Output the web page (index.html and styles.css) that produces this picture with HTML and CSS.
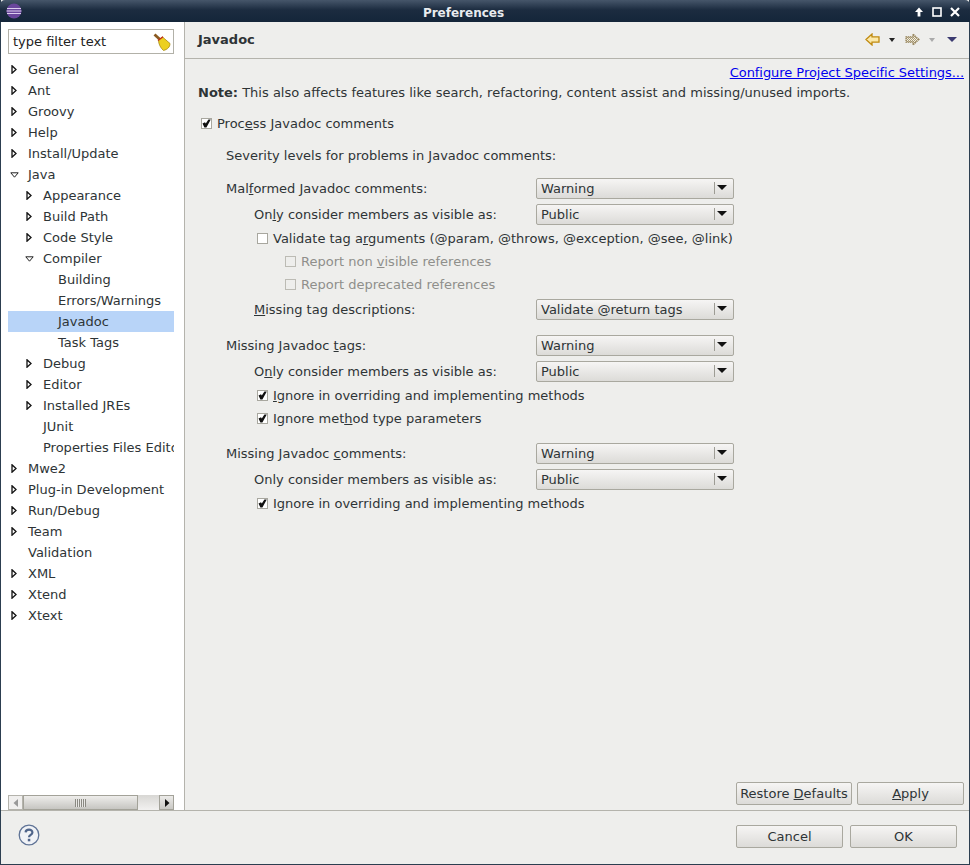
FILE: index.html
```html
<!DOCTYPE html>
<html lang="en">
<head>
    <meta charset="UTF-8">
    <title>Preferences</title>
    <link rel="stylesheet" href="styles.css">
</head>
<body>
<svg class="defs">
    <symbol id="closed" viewBox="0 0 6 9"><path d="M1 .8 L5 4.5 L1 8.2 Z" fill="#fff" stroke="#111" stroke-width="1.3"/></symbol>
    <symbol id="open" viewBox="0 0 9 6"><path d="M.8 .8 H8.2 L4.5 5.2 Z" fill="#fff" stroke="#222" stroke-width="1"/></symbol>
    <symbol id="tick" viewBox="0 0 9 9"><path d="M.5 4.5 L3 3.2 L3.8 4.6 L6.4 .6 H8.8 L4.4 8.4 H2.4 Z" fill="#111"/></symbol>
    <pattern id="dither" width="2" height="2" patternUnits="userSpaceOnUse">
        <rect width="2" height="2" fill="#f4f0e0"/>
        <rect width="1" height="1" fill="#a89a78"/>
        <rect x="1" y="1" width="1" height="1" fill="#a89a78"/>
    </pattern>
</svg>
<div class="window">
    <header class="titlebar">
        <svg class="eclipse" viewBox="0 0 16 16" width="16" height="16">
            <circle cx="8" cy="8" r="7.5" fill="#6a469c"/>
            <path d="M1 5.5 H15 M0.6 8 H15.4 M1 10.5 H15" stroke="#dccdee" stroke-width="1.2"/>
        </svg>
        <span class="title">Preferences</span>
        <div class="winbtns">
            <svg viewBox="0 0 12 12" width="12" height="12"><path d="M6 1.5 L10 6 H7.4 V10.5 H4.6 V6 H2 Z" fill="#fff"/></svg>
            <svg viewBox="0 0 12 12" width="12" height="12"><rect x="2" y="2" width="8" height="8" fill="none" stroke="#fff" stroke-width="1.6"/></svg>
            <svg viewBox="0 0 12 12" width="12" height="12"><path d="M2 2 L10 10 M10 2 L2 10" stroke="#fff" stroke-width="2.2"/></svg>
        </div>
    </header>

    <div class="main">
        <aside class="sidebar">
            <div class="filter">
                <span>type filter text</span>
                <svg viewBox="0 0 18 18" width="18" height="18">
                    <path d="M1.5 1.5 L7 6.5" stroke="#8a5a20" stroke-width="2.8"/>
                    <path d="M5.5 7 L9.5 4 L17 10.5 C17 14 14.5 16.5 10.5 17.5 C7.5 15 5.5 11 5.5 7 Z" fill="#ecd020" stroke="#a88a10" stroke-width="0.8"/>
                    <path d="M5 7.5 L10 3.8" stroke="#c02a1a" stroke-width="1.4"/>
                </svg>
            </div>
            <ul class="tree">
                <li><svg class="arrow"><use href="#closed"/></svg>General</li>
                <li><svg class="arrow"><use href="#closed"/></svg>Ant</li>
                <li><svg class="arrow"><use href="#closed"/></svg>Groovy</li>
                <li><svg class="arrow"><use href="#closed"/></svg>Help</li>
                <li><svg class="arrow"><use href="#closed"/></svg>Install/Update</li>
                <li><svg class="arrow-open"><use href="#open"/></svg>Java</li>
                <li class="lv1"><svg class="arrow"><use href="#closed"/></svg>Appearance</li>
                <li class="lv1"><svg class="arrow"><use href="#closed"/></svg>Build Path</li>
                <li class="lv1"><svg class="arrow"><use href="#closed"/></svg>Code Style</li>
                <li class="lv1"><svg class="arrow-open"><use href="#open"/></svg>Compiler</li>
                <li class="lv2">Building</li>
                <li class="lv2">Errors/Warnings</li>
                <li class="lv2 selected">Javadoc</li>
                <li class="lv2">Task Tags</li>
                <li class="lv1"><svg class="arrow"><use href="#closed"/></svg>Debug</li>
                <li class="lv1"><svg class="arrow"><use href="#closed"/></svg>Editor</li>
                <li class="lv1"><svg class="arrow"><use href="#closed"/></svg>Installed JREs</li>
                <li class="lv1">JUnit</li>
                <li class="lv1">Properties Files Editor</li>
                <li><svg class="arrow"><use href="#closed"/></svg>Mwe2</li>
                <li><svg class="arrow"><use href="#closed"/></svg>Plug-in Development</li>
                <li><svg class="arrow"><use href="#closed"/></svg>Run/Debug</li>
                <li><svg class="arrow"><use href="#closed"/></svg>Team</li>
                <li>Validation</li>
                <li><svg class="arrow"><use href="#closed"/></svg>XML</li>
                <li><svg class="arrow"><use href="#closed"/></svg>Xtend</li>
                <li><svg class="arrow"><use href="#closed"/></svg>Xtext</li>
            </ul>
            <div class="hscroll">
                <div class="sbtn sbtn-off"><svg viewBox="0 0 6 8" width="6" height="8"><path d="M5 0 L0.5 4 L5 8 Z" fill="#999"/></svg></div>
                <div class="thumb"><span class="grip"></span></div>
                <div class="strack"></div>
                <div class="sbtn sbtn-on"><svg viewBox="0 0 6 8" width="6" height="8"><path d="M1 0 L5.5 4 L1 8 Z" fill="#111"/></svg></div>
            </div>
        </aside>

        <section class="content">
            <div class="pagehead">
                <h1>Javadoc</h1>
                <div class="navicons">
                    <svg viewBox="0 0 15 13" width="15" height="13"><path d="M1 6.5 L7 1 V3.8 H14 V9.2 H7 V12 Z" fill="#fbe8a8" stroke="#c08a10" stroke-width="1.3"/></svg>
                    <svg class="mini" viewBox="0 0 6 4" width="6" height="4"><path d="M0 0 H6 L3 4 Z" fill="#222"/></svg>
                    <svg class="fwd" viewBox="0 0 15 13" width="15" height="13"><path d="M14 6.5 L8 1 V3.8 H1 V9.2 H8 V12 Z" fill="url(#dither)" stroke="#94825a" stroke-width="1.2" stroke-dasharray="1.5 .6"/></svg>
                    <svg class="mini" viewBox="0 0 6 4" width="6" height="4"><path d="M0 0 H6 L3 4 Z" fill="#aaa"/></svg>
                    <svg class="menu" viewBox="0 0 10 5" width="10" height="5"><path d="M0 0 H10 L5 5 Z" fill="#3b3a70"/></svg>
                </div>
            </div>

            <div class="linkrow"><a href="#">Configure Project Specific Settings...</a></div>
            <p class="note"><b>Note:</b> This also affects features like search, refactoring, content assist and missing/unused imports.</p>

            <div class="form">
                <div class="row check"><span class="box"><svg><use href="#tick"/></svg></span><span>Proc<u>e</u>ss Javadoc comments</span></div>

                <div class="row ind1 gap10">Severity levels for problems in Javadoc comments:</div>

                <div class="row ind1 gap11"><span class="label">Mal<u>f</u>ormed Javadoc comments:</span><div class="combo">Warning</div></div>
                <div class="row ind2 gap4"><span class="label">On<u>l</u>y consider members as visible as:</span><div class="combo">Public</div></div>
                <div class="row check ind3 gap2"><span class="box"></span><span>Validate tag a<u>r</u>guments (@param, @throws, @exception, @see, @link)</span></div>
                <div class="row check ind4 gap1 disabled"><span class="box"></span><span>Report non <u>v</u>isible references</span></div>
                <div class="row check ind4 gap1 disabled"><span class="box"></span><span>Report deprecated references</span></div>
                <div class="row ind2 gap3"><span class="label"><u>M</u>issing tag descriptions:</span><div class="combo">Validate @return tags</div></div>

                <div class="row ind1 gap14"><span class="label">Missing Javadoc <u>t</u>ags:</span><div class="combo">Warning</div></div>
                <div class="row ind2 gap4"><span class="label">O<u>n</u>ly consider members as visible as:</span><div class="combo">Public</div></div>
                <div class="row check ind3 gap2"><span class="box"><svg><use href="#tick"/></svg></span><span><u>I</u>gnore in overriding and implementing methods</span></div>
                <div class="row check ind3 gap1"><span class="box"><svg><use href="#tick"/></svg></span><span>Ignore met<u>h</u>od type parameters</span></div>

                <div class="row ind1 gap13"><span class="label">Missing Javadoc <u>c</u>omments:</span><div class="combo">Warning</div></div>
                <div class="row ind2 gap4"><span class="label">Only consider members as visible as:</span><div class="combo">Public</div></div>
                <div class="row check ind3 gap2"><span class="box"><svg><use href="#tick"/></svg></span><span>Ignore in overriding and implementing methods</span></div>
            </div>

            <div class="pagebtns">
                <button class="btn btn-restore">Restore <u>D</u>efaults</button>
                <button class="btn btn-apply"><u>A</u>pply</button>
            </div>
        </section>
    </div>

    <footer class="footer">
        <svg class="help" viewBox="0 0 22 22" width="22" height="22">
            <circle cx="11" cy="11" r="9.8" fill="#f0f2f6" stroke="#5f7396" stroke-width="1.3"/>
            <path d="M7.6 8.4 C7.8 4.8 14.4 4.8 14.4 8.4 C14.4 10.8 11 10.8 11 13.2" fill="none" stroke="#4f648a" stroke-width="2.2"/>
            <rect x="9.8" y="14.8" width="2.5" height="2.5" fill="#4f648a"/>
        </svg>
        <div class="dlgbtns">
            <button class="btn btn-dlg">Cancel</button>
            <button class="btn btn-dlg">OK</button>
        </div>
    </footer>
</div>
</body>
</html>
```

FILE: styles.css
```css
* {
    box-sizing: border-box;
}
html, body {
    margin: 0;
    height: 100%;
}
body {
    font-family: "DejaVu Sans", sans-serif;
    font-size: 13px;
    color: #2e3436;
    background: #eeeeec;
    overflow: hidden;
}
u {
    text-underline-offset: 1px;
}
.defs {
    position: absolute;
    width: 0;
    height: 0;
}
.window {
    display: flex;
    flex-direction: column;
    height: 865px;
    border-left: 1px solid #2c3e50;
    border-right: 1px solid #2c3e50;
    border-bottom: 1px solid #2c3e50;
}

/* title bar */
.titlebar {
    display: flex;
    align-items: center;
    justify-content: center;
    position: relative;
    height: 22px;
    margin: 0 -1px;
    padding: 3px 43px 0 0;
    flex: none;
    background: linear-gradient(#46566a, #1c2c40 45%, #14263a);
    border-radius: 5px 5px 0 0;
}
.eclipse {
    position: absolute;
    left: 6px;
    top: 3px;
}
.title {
    font-size: 12px;
    font-weight: bold;
    color: #e8ebef;
}
.winbtns {
    position: absolute;
    right: 9px;
    top: 6px;
    display: flex;
    gap: 6px;
}
.main {
    display: flex;
    flex: 1;
    min-height: 0;
}

/* left tree */
.sidebar {
    width: 184px;
    flex: none;
    display: flex;
    flex-direction: column;
    background: #fff;
    border-right: 1px solid #b4b3ac;
    border-bottom: 1px solid #b4b3ac;
    padding: 7px 10px 0 7px;
}
.filter {
    display: flex;
    align-items: center;
    justify-content: space-between;
    height: 25px;
    border: 1px solid #b2b1a8;
    padding: 0 2px 0 4px;
    color: #222;
    flex: none;
}
.tree {
    list-style: none;
    margin: 5px 0 0;
    padding: 0;
    flex: 1;
    overflow: hidden;
}
.tree li {
    display: flex;
    align-items: center;
    height: 21px;
    padding-left: 20px;
    white-space: nowrap;
    overflow: hidden;
}
.tree li.lv1 {
    padding-left: 35px;
}
.tree li.lv2 {
    padding-left: 50px;
}
.tree li.selected {
    background: #b8d4f8;
}
.arrow {
    width: 6px;
    height: 9px;
    margin-left: -17px;
    margin-right: 11px;
    flex: none;
}
.arrow-open {
    width: 9px;
    height: 6px;
    margin-left: -18px;
    margin-right: 9px;
    flex: none;
}
.hscroll {
    display: flex;
    height: 15px;
    flex: none;
}
.sbtn {
    width: 15px;
    display: flex;
    align-items: center;
    justify-content: center;
    border: 1px solid #b4b3ac;
}
.sbtn-off {
    background: #f0efee;
}
.sbtn-on {
    background: linear-gradient(#ecebe9, #c9c8c4);
    border-color: #a3a299;
}
.thumb {
    width: 115px;
    display: flex;
    align-items: center;
    justify-content: center;
    background: linear-gradient(#eeedeb, #c6c5c1);
    border: 1px solid #a3a299;
}
.grip {
    width: 11px;
    height: 8px;
    background: repeating-linear-gradient(90deg, #8a8982 0 1px, #e8e7e5 1px 2px);
}
.strack {
    flex: 1;
    background: linear-gradient(#d8d7d4, #f2f1f0);
}

/* right page */
.content {
    flex: 1;
    display: flex;
    flex-direction: column;
    padding-right: 5px;
    border-bottom: 1px solid #b4b3ac;
    min-width: 0;
}
.pagehead {
    display: flex;
    align-items: center;
    justify-content: space-between;
    height: 37px;
    margin-right: -5px;
    padding: 0 12px 1px 13px;
    border-bottom: 1px solid #b4b3ac;
    flex: none;
}
.pagehead h1 {
    margin: 0 0 1px;
    font-size: 13px;
    font-weight: bold;
}
.navicons {
    display: flex;
    align-items: center;
}
.navicons .mini {
    margin-left: 9px;
}
.navicons .fwd {
    margin-left: 10px;
}
.navicons .menu {
    margin-left: 12px;
}
.linkrow {
    display: flex;
    justify-content: flex-end;
    margin-top: 5px;
    height: 18px;
    line-height: 18px;
}
.linkrow a {
    color: #0000ee;
    letter-spacing: -0.05px;
}
.note {
    margin: 2px 0 0 13px;
    line-height: 18px;
    white-space: nowrap;
}
.form {
    margin-top: 10px;
    padding-left: 16px;
    flex: 1;
}
.row {
    display: flex;
    align-items: center;
    height: 22px;
    white-space: nowrap;
}
.label {
    width: 310px;
    flex: none;
}
.ind2 .label {
    width: 282px;
}
.box {
    width: 11px;
    height: 11px;
    border: 1px solid #a8a79f;
    background: #fff;
    margin-right: 5px;
    flex: none;
}
.box svg {
    display: block;
    width: 9px;
    height: 9px;
}
.disabled {
    color: #8f8f8b;
}
.disabled .box {
    background: #eeeeec;
    border-color: #bcbbb4;
}
.ind1 { margin-left: 25px; }
.ind2 { margin-left: 53px; }
.ind3 { margin-left: 56px; }
.ind4 { margin-left: 84px; }
.gap1 { margin-top: 1px; }
.gap2 { margin-top: 2px; }
.gap3 { margin-top: 3px; }
.gap4 { margin-top: 4px; }
.gap10 { margin-top: 10px; }
.gap11 { margin-top: 11px; }
.gap13 { margin-top: 13px; }
.gap14 { margin-top: 14px; }
.combo {
    position: relative;
    align-self: flex-start;
    margin-top: 1px;
    width: 198px;
    height: 21px;
    line-height: 19px;
    padding-left: 4px;
    border: 1px solid #a9a89f;
    border-radius: 2px;
    background: linear-gradient(#f6f5f4, #dcdbd8);
}
.combo::before {
    content: "";
    position: absolute;
    right: 18px;
    top: 3px;
    bottom: 4px;
    border-left: 1px solid #9d9c94;
}
.combo::after {
    content: "";
    position: absolute;
    right: 6px;
    top: 6px;
    border-left: 5px solid transparent;
    border-right: 5px solid transparent;
    border-top: 5px solid #111;
}
.pagebtns {
    display: flex;
    justify-content: flex-end;
    gap: 5px;
    margin-bottom: 5px;
}
.btn {
    font: inherit;
    color: inherit;
    height: 23px;
    padding: 0;
    border: 1px solid #a9a89f;
    border-radius: 2px;
    background: linear-gradient(#f6f5f4, #dcdbd8);
}
.btn-restore {
    width: 116px;
}
.btn-apply {
    width: 107px;
}

/* dialog buttons */
.footer {
    height: 53px;
    flex: none;
    display: flex;
    align-items: flex-start;
    justify-content: space-between;
    padding: 14px 12px 0 17px;
}
.help {
    display: block;
    margin-top: -1px;
}
.dlgbtns {
    display: flex;
    gap: 7px;
}
.btn-dlg {
    width: 107px;
}
```
